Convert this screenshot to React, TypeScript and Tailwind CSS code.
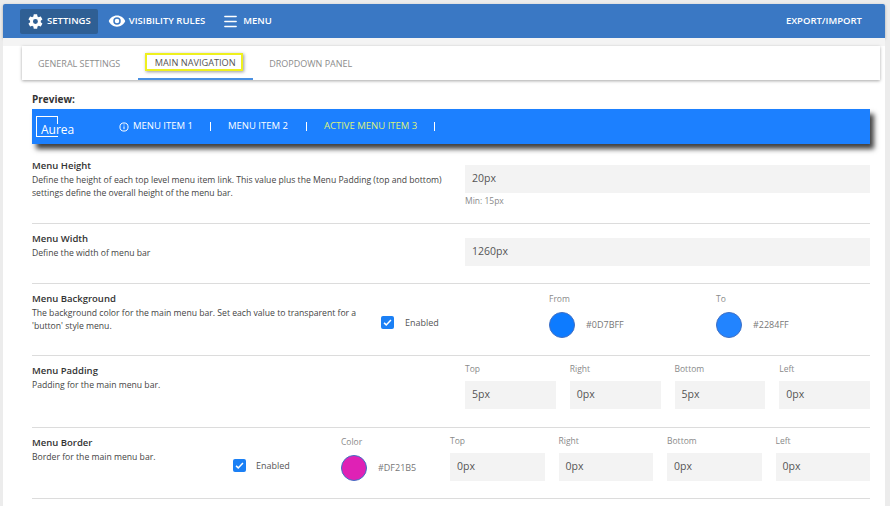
import React from "react";
import { Menu } from "lucide-react";

const font = { fontFamily: '"Open Sans", "Noto Sans", sans-serif' };

function Gear() {
  return (
    <svg viewBox="0 0 24 24" className="w-[17px] h-[17px] fill-white">
      <path d="M19.4 13c.04-.33.06-.66.06-1s-.02-.67-.07-1l2.15-1.68c.2-.15.25-.42.13-.64l-2.04-3.53c-.12-.22-.39-.3-.61-.22l-2.54 1.02c-.53-.4-1.1-.74-1.72-1l-.38-2.7A.5.5 0 0 0 13.9 1.8H9.900a.5.5 0 0 0-.5.42l-.38 2.7c-.62.26-1.200.6-1.720 1L4.760 4.900c-.23-.08-.49 0-.61.22L2.110 8.650c-.13.22-.07.49.12.64L4.390 11c-.05.33-.08.67-.08 1s.03.67.07 1l-2.150 1.680c-.19.15-.25.42-.12.64l2.040 3.530c.12.22.38.3.61.22l2.540-1.020c.53.4 1.100.74 1.720 1l.38 2.700c.04.24.25.42.5.42h4c.25 0 .46-.18.5-.42l.38-2.700c.62-.26 1.190-.6 1.720-1l2.540 1.020c.23.08.49 0 .61-.22l2.040-3.530c.12-.22.07-.49-.13-.64L19.400 13zM11.900 15.500a3.500 3.500 0 1 1 0-7 3.500 3.500 0 0 1 0 7z" />
    </svg>
  );
}

function Eye() {
  return (
    <svg viewBox="0 0 24 24" className="w-[18px] h-[18px] fill-white">
      <path d="M12 4.500C7 4.500 2.700 7.600 1 12c1.700 4.400 6 7.500 11 7.500s9.300-3.100 11-7.500c-1.700-4.400-6-7.500-11-7.500zm0 12.500a5 5 0 1 1 0-10 5 5 0 0 1 0 10zm0-8a3 3 0 1 0 0 6 3 3 0 0 0 0-6z" />
    </svg>
  );
}

function Check() {
  return (
    <span className="w-[13px] h-[13px] rounded-[2px] bg-[#1b80f5] flex items-center justify-center shrink-0">
      <svg viewBox="0 0 16 16" className="w-[11px] h-[11px] fill-none stroke-white stroke-[2.2]">
        <path d="M3 8.500l3.200 3L13 4.500" />
      </svg>
    </span>
  );
}

function Label({ title, text }: { title: string; text: React.ReactNode }) {
  return (
    <div className="text-[8.650px] leading-[13px] text-[#444]">
      <div className="text-[9.500px] font-semibold leading-[14px] text-[#333] mb-[1px]">{title}</div>
      {text}
    </div>
  );
}

function Field({ label, value }: { label: string; value: string }) {
  return (
    <div className="flex-1">
      <div className="text-[8.500px] leading-[12px] text-[#8a8a8a] mb-[6px]">{label}</div>
      <div className="h-[28px] bg-[#f3f3f3] pl-[7px] flex items-center text-[10.500px] text-[#555]">{value}</div>
    </div>
  );
}

function Swatch({ label, color, hex, w }: { label: string; color: string; hex: string; w: string }) {
  return (
    <div className={`${w} pt-[1px]`}>
      <div className="text-[8.500px] leading-[12px] text-[#8a8a8a] mb-[7px]">{label}</div>
      <div className="flex items-center gap-[11px]">
        <span className={`w-[26px] h-[26px] rounded-full border border-[#3f6fc4] ${color}`} />
        <span className="text-[9px] text-[#777]">{hex}</span>
      </div>
    </div>
  );
}

export default function App() {
  return (
    <div className="h-[506px] overflow-hidden bg-[#ececec] pl-[3px] pr-[5px] pt-[4px]" style={font}>
      <div className="bg-white h-[510px] rounded-t-[2px]">
        <header className="h-[34px] bg-[#3a78c4] rounded-t-[2px] shadow-[0_1px_3px_rgba(0,0,0,0.3)] flex items-center pl-[17px] pr-[23px] text-white text-[9.500px] font-semibold">
          <div className="h-[25px] px-[7px] rounded-[2px] bg-[#2f5f94] flex items-center gap-[3px]">
            <Gear />
            SETTINGS
          </div>
          <div className="flex items-center gap-[3px] ml-[10px]">
            <Eye />
            VISIBILITY RULES
          </div>
          <div className="flex items-center gap-[4px] ml-[17px]">
            <Menu size={17} strokeWidth={2} />
            MENU
          </div>
          <div className="ml-auto">EXPORT/IMPORT</div>
        </header>

        <div className="bg-[#f4f4f4] h-[8px]" />

        <div className="mx-[19px] mr-[5px] h-[34px] bg-white shadow-[0_1px_3px_rgba(0,0,0,0.35)] flex pl-[16px] text-[9px] text-[#8c8c8c] font-medium">
          <div className="flex items-center pt-[1px]">GENERAL SETTINGS</div>
          <div className="ml-[18px] w-[115px] border-b-[2px] border-[#4a90e2] flex items-center pl-[7px]">
            <span className="h-[18px] w-[98px] pl-[2px] pt-[1px] text-[9.200px] border-[2px] border-[#eef01e] shadow-[1px_1px_3px_rgba(0,0,0,0.4)] flex items-center justify-center text-[#555]">
              MAIN NAVIGATION
            </span>
          </div>
          <div className="ml-[16px] flex items-center pt-[1px]">DROPDOWN PANEL</div>
        </div>

        <div className="pl-[29px] pr-[15px]">
          <div className="pt-[12px] text-[10px] font-bold leading-[14px] text-[#333]">Preview:</div>
          <div className="mt-[3px] h-[35px] bg-[#1c80ff] shadow-[4px_5px_5px_rgba(0,0,0,0.75)] flex items-center pl-[4px] text-white text-[9.500px]">
            <div className="relative w-[37px] h-[22px] shrink-0 mt-[1px]">
              <span className="absolute left-0 top-0 w-[22px] h-[21px] border-[1.500px] border-white" />
              <span className="absolute left-[5px] top-[8px] text-[12px] leading-[12px] bg-[#1c80ff] pr-[1px]">Aurea</span>
            </div>
            <svg viewBox="0 0 16 16" className="ml-[46px] w-[10px] h-[10px] fill-none stroke-white stroke-[1.600]">
              <circle cx="8" cy="8" r="6.500" />
              <path d="M8 7v4.500M8 4v1.500" />
            </svg>
            <span className="ml-[4px]">MENU ITEM 1</span>
            <span className="ml-[17px] w-px h-[9px] bg-white" />
            <span className="ml-[17px]">MENU ITEM 2</span>
            <span className="ml-[18px] w-px h-[9px] bg-white" />
            <span className="ml-[17px] text-[#dcf27a]">ACTIVE MENU ITEM 3</span>
            <span className="ml-[17px] w-px h-[9px] bg-white" />
          </div>

          <div className="h-[72px] mt-[8px] pt-[7px] border-b border-[#dcdcdc] flex">
            <div className="w-[433px]">
              <Label
                title="Menu Height"
                text={
                  <>
                    Define the height of each top level menu item link. This value plus the Menu Padding (top and bottom)
                    <br />
                    settings define the overall height of the menu bar.
                  </>
                }
              />
            </div>
            <div className="flex-1 mt-[6px]">
              <div className="h-[28px] bg-[#f3f3f3] pl-[7px] flex items-center text-[10.500px] text-[#555]">20px</div>
              <div className="mt-[2px] text-[8.500px] leading-[12px] text-[#8a8a8a]">Min: 15px</div>
            </div>
          </div>

          <div className="h-[60px] pt-[8px] border-b border-[#dcdcdc] flex">
            <div className="w-[433px]">
              <Label title="Menu Width" text="Define the width of menu bar" />
            </div>
            <div className="flex-1 mt-[6px] h-[28px] bg-[#f3f3f3] pl-[7px] flex items-center text-[10.500px] text-[#555]">1260px</div>
          </div>

          <div className="h-[72px] pt-[8px] border-b border-[#dcdcdc] flex">
            <div className="w-[349px]">
              <Label
                title="Menu Background"
                text={
                  <>
                    The background color for the main menu bar. Set each value to transparent for a
                    <br />
                    'button' style menu.
                  </>
                }
              />
            </div>
            <div className="w-[168px] h-[13px] mt-[24px] flex items-center gap-[11px] text-[9px] text-[#555]">
              <Check />
              Enabled
            </div>
            <Swatch label="From" color="bg-[#0d7bff]" hex="#0D7BFF" w="w-[167px]" />
            <Swatch label="To" color="bg-[#2284ff]" hex="#2284FF" w="w-[120px]" />
          </div>

          <div className="h-[72px] pt-[7px] border-b border-[#dcdcdc] flex">
            <div className="w-[433px] pt-[1px]">
              <Label title="Menu Padding" text="Padding for the main menu bar." />
            </div>
            <div className="flex-1 flex gap-[14px]">
              <Field label="Top" value="5px" />
              <Field label="Right" value="0px" />
              <Field label="Bottom" value="5px" />
              <Field label="Left" value="0px" />
            </div>
          </div>

          <div className="h-[71px] pt-[7px] border-b border-[#dcdcdc] flex">
            <div className="w-[201px] pt-[1px]">
              <Label title="Menu Border" text="Border for the main menu bar." />
            </div>
            <div className="w-[108px] h-[13px] mt-[24px] flex items-center gap-[10px] text-[9px] text-[#555]">
              <Check />
              Enabled
            </div>
            <Swatch label="Color" color="bg-[#df21b5]" hex="#DF21B5" w="w-[109px]" />
            <div className="flex-1 flex gap-[14px]">
              <Field label="Top" value="0px" />
              <Field label="Right" value="0px" />
              <Field label="Bottom" value="0px" />
              <Field label="Left" value="0px" />
            </div>
          </div>
        </div>
      </div>
    </div>
  );
}
